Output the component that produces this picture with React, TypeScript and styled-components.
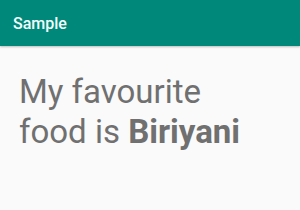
import React from "react";
import styled, { createGlobalStyle } from "styled-components";

const Global = createGlobalStyle`
  html, body { margin: 0; padding: 0; background: #fafafa; }
  body { font-family: Roboto, "Noto Sans", sans-serif; }
`;

const Page = styled.div`
  width: 300px;
  height: 210px;
  display: flex;
  flex-direction: column;
  background: #fafafa;
  overflow: hidden;
`;

const AppBar = styled.header`
  height: 46px;
  flex: none;
  display: flex;
  align-items: center;
  padding: 0 13px;
  background: #00897b;
  box-shadow: 0 1px 2px rgba(0, 0, 0, 0.25);
  position: relative;
  z-index: 1;
`;

const Title = styled.span`
  color: #f4fffd;
  font-size: 16px;
  font-weight: 500;
`;

const Content = styled.main`
  padding: 26px 19px 0 19px;
`;

const Message = styled.p`
  margin: 0;
  color: #707070;
  font-size: 33px;
  line-height: 40px;
  font-weight: 400;
`;

const Food = styled.strong`
  font-weight: 700;
`;

export default function App() {
  return (
    <Page>
      <Global />
      <AppBar>
        <Title>Sample</Title>
      </AppBar>
      <Content>
        <Message>
          My favourite
          <br />
          food is <Food>Biriyani</Food>
        </Message>
      </Content>
    </Page>
  );
}
